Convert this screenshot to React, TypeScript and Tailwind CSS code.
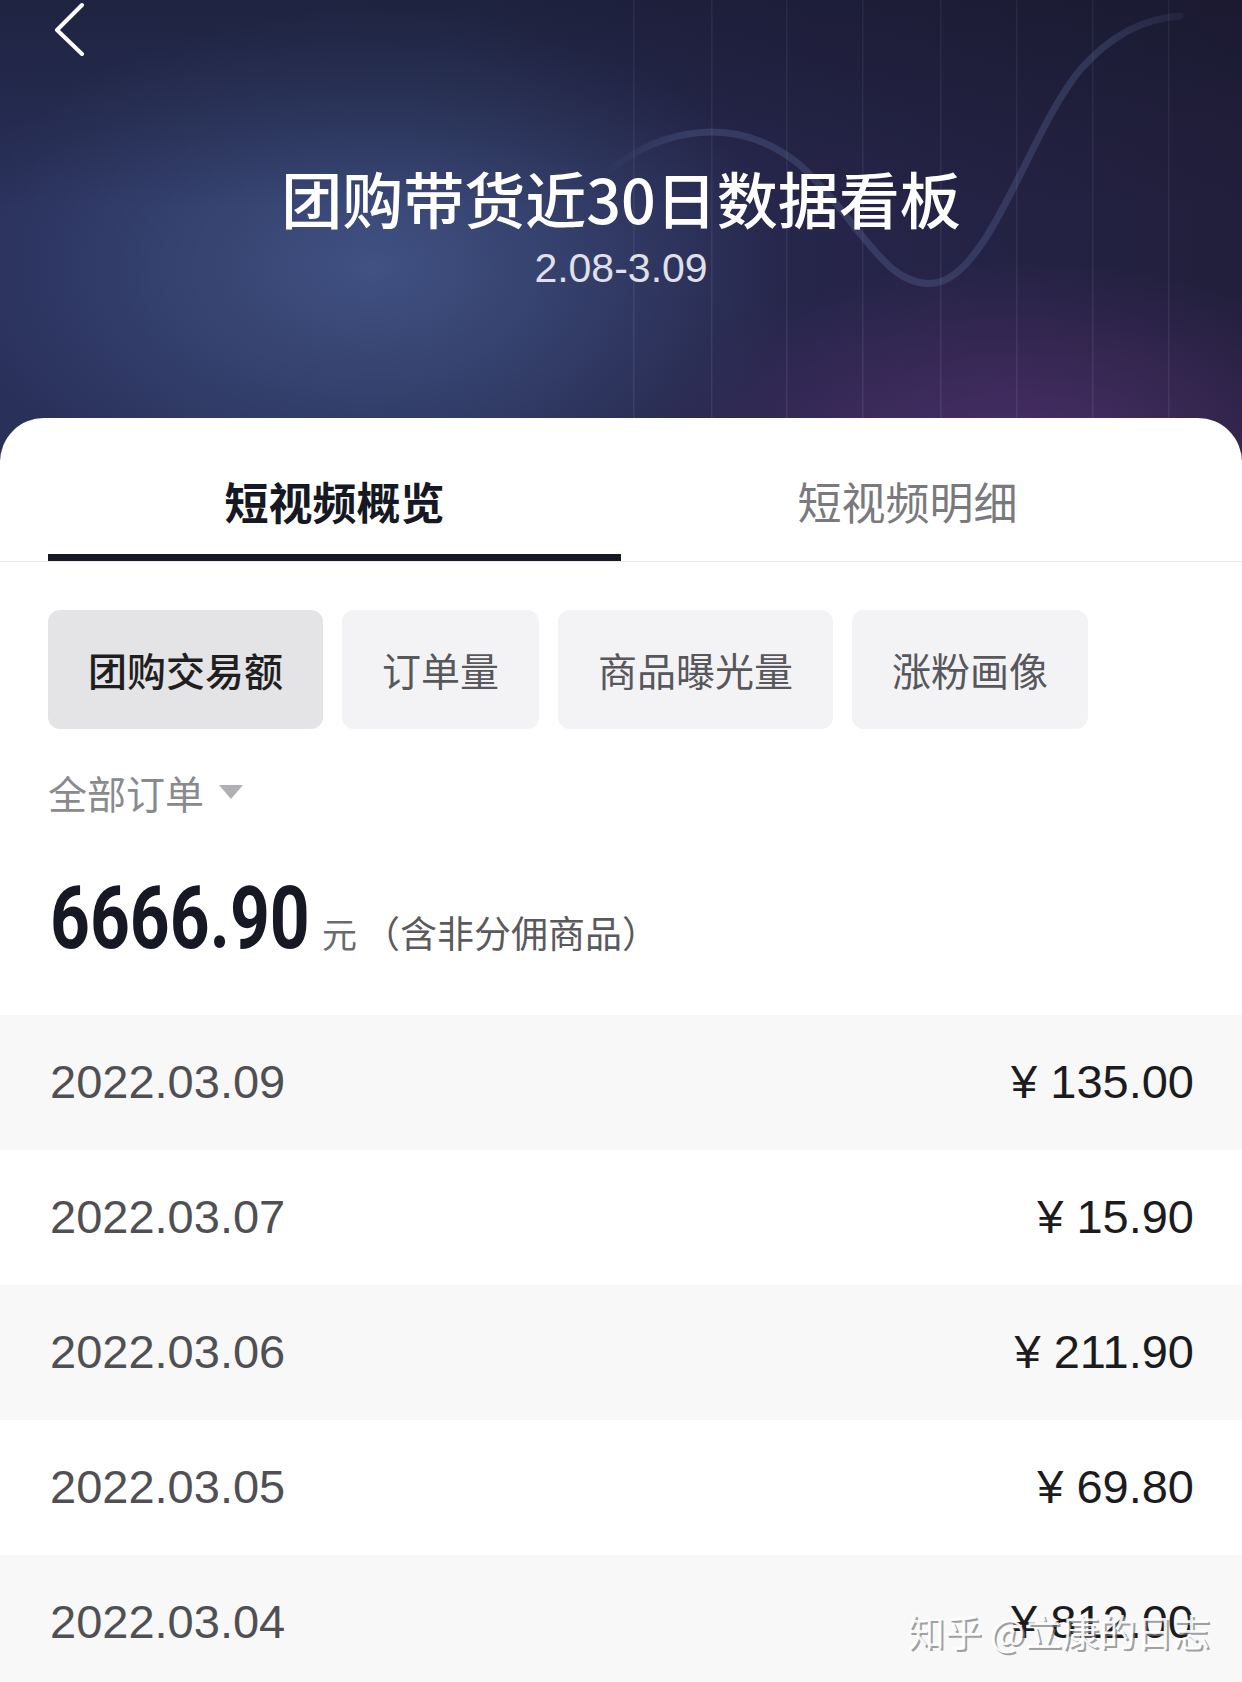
import React from "react";

const rows: [string, string][] = [
  ["2022.03.09", "¥ 135.00"],
  ["2022.03.07", "¥ 15.90"],
  ["2022.03.06", "¥ 211.90"],
  ["2022.03.05", "¥ 69.80"],
  ["2022.03.04", "¥ 812.00"],
];

const chips = ["团购交易额", "订单量", "商品曝光量", "涨粉画像"];

function HeaderArt() {
  const lines = [633, 711, 786, 862, 940, 1016, 1092, 1168];
  return (
    <svg className="absolute inset-0 h-full w-full" viewBox="0 0 1242 460" preserveAspectRatio="none">
      <defs>
        <linearGradient id="wave" x1="600" y1="0" x2="1190" y2="0" gradientUnits="userSpaceOnUse">
          <stop offset="0" stopColor="#6f82b4" stopOpacity="0" />
          <stop offset="0.15" stopColor="#6f82b4" stopOpacity="0.24" />
          <stop offset="0.85" stopColor="#6f82b4" stopOpacity="0.24" />
          <stop offset="1" stopColor="#6f82b4" stopOpacity="0.08" />
        </linearGradient>
        <linearGradient id="vline" x1="0" y1="0" x2="0" y2="460" gradientUnits="userSpaceOnUse">
          <stop offset="0" stopColor="#ffffff" stopOpacity="0.05" />
          <stop offset="1" stopColor="#ffffff" stopOpacity="0.08" />
        </linearGradient>
      </defs>
      {lines.map((x) => (
        <rect key={x} x={x} y={0} width={1.5} height={460} fill="url(#vline)" />
      ))}
      <path
        d="M610 170 C 660 130, 735 112, 800 165 C 860 220, 885 290, 935 283 C 990 275, 1030 130, 1080 70 C 1115 30, 1150 18, 1180 16"
        fill="none"
        stroke="url(#wave)"
        strokeWidth={7}
        strokeLinecap="round"
      />
    </svg>
  );
}

export default function App() {
  return (
    <div className="relative h-[1682px] w-[1242px] overflow-hidden bg-white font-['Noto_Sans_CJK_SC','Noto_Sans',sans-serif]">
      {/* Header */}
      <div className="relative h-[460px] overflow-hidden bg-[radial-gradient(ellipse_420px_260px_at_30%_58%,rgba(72,92,145,0.75),transparent),radial-gradient(ellipse_380px_200px_at_82%_100%,rgba(92,52,120,0.7),transparent),linear-gradient(90deg,#29305a_0%,#283056_35%,#26254a_65%,#221f3c_100%)]">
        <div className="absolute inset-0 bg-[linear-gradient(180deg,rgba(18,20,36,0.45)_0%,rgba(18,20,36,0)_45%)]" />
        <HeaderArt />
        <div className="relative flex flex-col">
          <svg className="ml-[52px] mt-[2px] h-[54px] w-[34px]" viewBox="0 0 34 54" fill="none">
            <path d="M30 3 L5 28 L30 52" stroke="#ffffff" strokeWidth={4} strokeLinecap="round" strokeLinejoin="round" />
          </svg>
          <h1 className="mt-[106px] text-center text-[61px] font-medium leading-[72px] text-white">
            团购带货近30日数据看板
          </h1>
          <p className="mt-[11px] text-center font-['Liberation_Sans',sans-serif] text-[41px] leading-[46px] text-[#dfe0ea]">
            2.08-3.09
          </p>
        </div>
      </div>

      {/* Card */}
      <div className="relative -mt-[42px] rounded-t-[44px] bg-white">
        <div className="border-b border-[#ebebeb] pt-[53px]">
          <div className="flex px-[48px]">
            <div className="flex flex-1 flex-col items-center">
              <span className="text-[44px] font-bold leading-[60px] text-[#161823]">短视频概览</span>
              <div className="mt-[23px] h-[7px] w-full bg-[#161823]" />
            </div>
            <div className="flex flex-1 flex-col items-center">
              <span className="text-[44px] leading-[60px] text-[#7a7a7e]">短视频明细</span>
              <div className="mt-[23px] h-[7px] w-full" />
            </div>
          </div>
        </div>

        <div className="mt-[48px] flex gap-[19px] px-[48px]">
          {chips.map((c, i) => (
            <div
              key={c}
              className={
                i === 0
                  ? "flex h-[119px] items-center rounded-[12px] bg-[#e4e4e6] px-[40px] text-[39px] font-medium text-[#1f1f22]"
                  : "flex h-[119px] items-center rounded-[12px] bg-[#f3f3f5] px-[40px] text-[39px] text-[#57575c]"
              }
            >
              {c}
            </div>
          ))}
        </div>

        <div className="mt-[36px] flex h-[54px] items-center px-[48px]">
          <span className="text-[39px] leading-[54px] text-[#8a8a8e]">全部订单</span>
          <svg className="ml-[15px] h-[14px] w-[24px]" viewBox="0 0 24 14">
            <path d="M0 0 H24 L12 14 Z" fill="#b0b0b4" />
          </svg>
        </div>

        <div className="mt-[56px] flex items-baseline px-[50px]">
          <span className="inline-block w-[258px] whitespace-nowrap">
            <span className="inline-block origin-left scale-x-[0.8] font-['Roboto',sans-serif] text-[87px] font-bold leading-[86px] text-[#161823]">
              6666.90
            </span>
          </span>
          <span className="ml-[14px] text-[35px] text-[#6a6a6e]">元</span>
          <span className="ml-[6px] text-[37px] text-[#5a5a5e]">（含非分佣商品）</span>
        </div>

        <div className="mt-[54px]">
          {rows.map(([d, v], i) => (
            <div
              key={d}
              className={
                "flex h-[135px] items-center justify-between pl-[50px] pr-[48px] font-['Liberation_Sans',sans-serif] text-[47px] " +
                (i % 2 === 0 ? "bg-[#f8f8f8]" : "bg-white")
              }
            >
              <span className="text-[#505054]">{d}</span>
              <span className="text-[#1c1c1f]">{v}</span>
            </div>
          ))}
        </div>
      </div>

      <div className="absolute right-[32px] top-[1607px] text-[37px] leading-[48px] text-white/90 [text-shadow:2px_2px_0_rgba(120,120,120,0.7)]">
        知乎 @立康的日志
      </div>
    </div>
  );
}
